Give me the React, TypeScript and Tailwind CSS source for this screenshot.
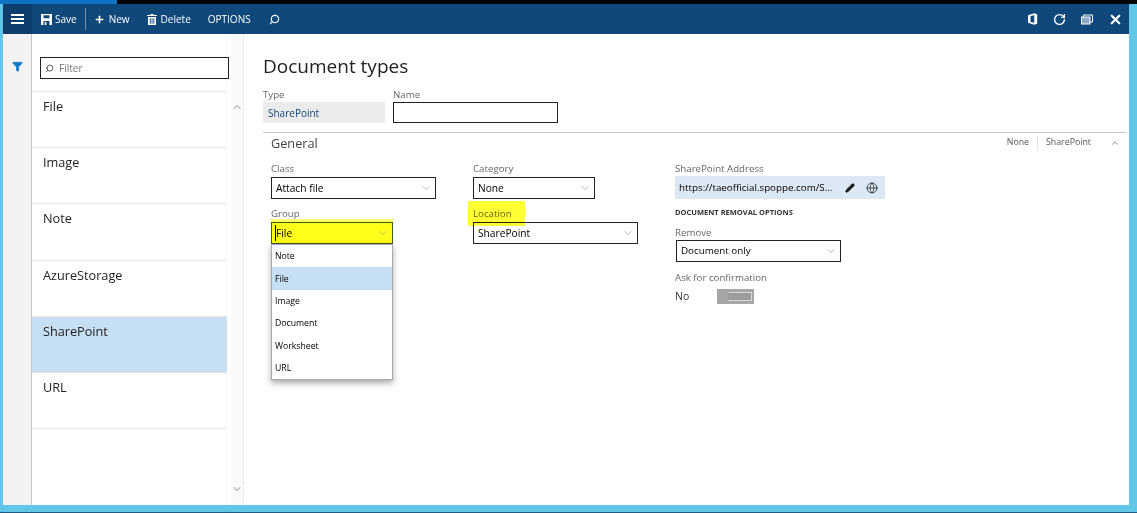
import { ChevronDown, ChevronUp, Filter, Globe, Pencil, Plus, RotateCw, Search, X } from "lucide-react";

const listItems = ["File", "Image", "Note", "AzureStorage", "SharePoint", "URL"];
const groupOptions = ["Note", "File", "Image", "Document", "Worksheet", "URL"];

function Label({ text, className = "" }: { text: string; className?: string }) {
  return <div className={`h-[16px] text-[9.7px] leading-[15px] text-[#666666] ${className}`}>{text}</div>;
}

function SelectBox({ value, width, textSize = "text-[10.2px]" }: { value: string; width: string; textSize?: string }) {
  return (
    <div className={`flex h-[22px] items-center justify-between border border-[#222222] bg-white pl-1 pr-[3px] ${width}`}>
      <span className={`pt-px text-black ${textSize}`}>{value}</span>
      <ChevronDown className="h-3 w-3 text-[#888888]" strokeWidth={1.25} />
    </div>
  );
}

export default function App() {
  return (
    <div className="flex h-[513px] w-[1137px] flex-col overflow-hidden bg-[#62c6e8] font-['Open_Sans',sans-serif] text-[#222222]">
      {/* Top strip */}
      <div className="flex h-1 shrink-0 bg-black">
        <div className="w-[117px] bg-[#0f73c4]" />
      </div>

      <div className="mr-2 ml-[3px] flex h-[501px] shrink-0 flex-col bg-white">
        {/* Command bar */}
        <div className="flex h-[30px] shrink-0 items-center bg-[#11487c] text-[10px] text-white">
          <div className="flex h-full w-[29px] items-center justify-center bg-[#0d3d6b]">
            <div className="flex w-[13px] flex-col gap-[2px]">
              <div className="h-[2px] bg-white" />
              <div className="h-[2px] bg-white" />
              <div className="h-[2px] bg-white" />
            </div>
          </div>
          <div className="ml-[9px] flex items-center gap-[3px]">
            <svg viewBox="0 0 11 11" className="h-[11px] w-[11px]" fill="white">
              <path d="M0 0h11v11H8.5V7h-6v4H0ZM2.5 1.2v3h6v-3ZM3.8 8h1.6v3H3.8Z" fillRule="evenodd" />
            </svg>
            <span className="pt-px">Save</span>
          </div>
          <div className="ml-2 h-[22px] w-px bg-[#6f93b5]" />
          <div className="ml-2 flex items-center gap-1">
            <Plus className="h-[11px] w-[11px]" strokeWidth={3.5} />
            <span className="pt-px">New</span>
          </div>
          <div className="ml-[17px] flex items-center gap-1">
            <svg viewBox="0 0 10 11" className="h-[11px] w-[10px]" fill="white">
              <path d="M3.5 0h3v1H10v1H0V1h3.5ZM1 3h8v8H1ZM2.8 4.2v5.6h.9V4.2Zm1.8 0v5.6h.9V4.2Zm1.8 0v5.6h.9V4.2Z" fillRule="evenodd" />
            </svg>
            <span className="pt-px">Delete</span>
          </div>
          <span className="ml-[17px] pt-px">OPTIONS</span>
          <Search className="ml-[18px] h-[11px] w-[11px] -scale-x-100" strokeWidth={2.5} />
          <div className="ml-auto flex items-center gap-[15px] pr-[6px]">
            <svg viewBox="0 0 12 14" className="h-[12px] w-[10px]" fill="white">
              <path d="M0 2.6 7.5 0 11 1.2v11.6L7.5 14 0 11.4ZM7.5 2.4 3 3.4v7.2l4.5 1Z" fillRule="evenodd" />
            </svg>
            <RotateCw className="h-[13px] w-[13px]" strokeWidth={2.5} />
            <svg viewBox="0 0 12 11" className="h-[11px] w-[12px]" fill="none" stroke="white" strokeWidth="1">
              <rect x="0.5" y="3" width="8.5" height="7" fill="#8fa9c4" />
              <path d="M2.5 3V1h9v7H9" />
            </svg>
            <X className="h-[15px] w-[15px]" strokeWidth={3.5} />
          </div>
        </div>

        <div className="flex min-h-0 flex-1">
          {/* Filter rail */}
          <div className="flex w-[29px] shrink-0 justify-center border-r border-[#c8c8c8] bg-[#f2f2f2] pt-[27px]">
            <Filter className="h-[11px] w-[11px] fill-[#0f7ac4] text-[#0f7ac4]" />
          </div>

          {/* Document list */}
          <div className="flex w-[212px] shrink-0 border-r border-[#ececec]">
            <div className="w-[195px] shrink-0">
              <div className="h-[58px] border-b border-[#e6e6e6] px-2 pt-[23px]">
                <div className="flex h-[22px] w-[189px] items-center gap-[5px] border border-[#222222] pl-1">
                  <Search className="h-[9px] w-[9px] -scale-x-100 text-[#555555]" strokeWidth={2.5} />
                  <span className="text-[10px] text-[#777777]">Filter</span>
                </div>
              </div>
              {listItems.map((item) => (
                <div
                  key={item}
                  className={`h-[56.2px] border-b border-[#e6e6e6] pl-[11px] pt-[5px] text-[12.7px] ${item === "SharePoint" ? "bg-[#c7dff2]" : ""}`}
                >
                  {item}
                </div>
              ))}
            </div>
            <div className="ml-1 flex flex-1 flex-col items-center justify-between bg-[#fafafa] pt-[67px] pb-[10px]">
              <ChevronUp className="h-[12px] w-[12px] text-[#bdbdbd]" strokeWidth={2.5} />
              <ChevronDown className="h-[12px] w-[12px] text-[#bdbdbd]" strokeWidth={2.5} />
            </div>
          </div>

          {/* Details */}
          <div className="min-w-0 flex-1 pr-[3px] pl-[19px]">
            <h1 className="mt-[16px] h-[32px] text-[19px] leading-[32px] font-normal text-[#222222]">Document types</h1>
            <div className="mt-[5px] flex gap-2">
              <div>
                <Label text="Type" />
                <div className="-mt-px flex h-[21px] w-[122px] items-center bg-[#ebebeb] pt-px pl-[5px] text-[10px] text-[#11487c]">SharePoint</div>
              </div>
              <div>
                <Label text="Name" />
                <div className="-mt-px h-[21px] w-[165px] border border-[#222222]" />
              </div>
            </div>

            <div className="mt-[9px] border-t border-[#cccccc]">
              <div className="flex h-[20px] items-center justify-between pr-[6px] pl-[8px]">
                <span className="pt-px text-[12.7px] text-[#444444]">General</span>
                <div className="flex items-center text-[8.8px] text-[#555555]">
                  <span className="border-r border-[#e2e2e2] pr-2">None</span>
                  <span className="pl-2">SharePoint</span>
                  <ChevronUp className="ml-[19px] h-[10px] w-[10px]" strokeWidth={1.5} />
                </div>
              </div>

              <div className="mt-[8px] flex pl-2">
                {/* First column */}
                <div className="w-[202px]">
                  <Label text="Class" />
                  <SelectBox value="Attach file" width="w-[165px]" />
                  <Label text="Group" className="mt-[7px]" />
                  <div className="relative w-[122px]">
                    <div className="flex h-[22px] items-center justify-between border border-[#3d5a1f] bg-[#ffff1a] pl-[3px] pr-[3px] shadow-[0_-3px_0_#ffff66]">
                      <span className="border-l border-black pt-px text-[10.2px] text-black">File</span>
                      <ChevronDown className="h-3 w-3 text-[#888888]" strokeWidth={1.25} />
                    </div>
                    <div className="absolute top-[22px] left-0 w-[122px] border border-[#aaaaaa] bg-white shadow-[0_3px_6px_rgba(0,0,0,0.35)]">
                      {groupOptions.map((option) => (
                        <div
                          key={option}
                          className={`flex h-[22.4px] items-center pl-[3px] pt-px text-[8.7px] text-black ${option === "File" ? "bg-[#c7dff2]" : ""}`}
                        >
                          {option}
                        </div>
                      ))}
                    </div>
                  </div>
                </div>

                {/* Second column */}
                <div className="relative w-[202px]">
                  <Label text="Category" />
                  <SelectBox value="None" width="w-[122px]" />
                  <Label text="Location" className="mt-[7px]" />
                  <SelectBox value="SharePoint" width="w-[165px]" />
                  {/* marker highlight drawn over the label */}
                  <div className="absolute top-[40px] -left-[5px] h-[25px] w-[57px] bg-[#ffff33] mix-blend-multiply" />
                </div>

                {/* Third column */}
                <div>
                  <Label text="SharePoint Address" />
                  <div className="-mt-px flex h-[23px] w-[210px] items-center bg-[#dce8f4] pl-1 text-[9.8px] text-black">
                    <span className="shrink-0 pt-px">https://taeofficial.spoppe.com/S...</span>
                    <Pencil className="ml-[13px] h-[10px] w-[10px] shrink-0 fill-[#222222]" />
                    <Globe className="ml-[11px] h-3 w-3 shrink-0" strokeWidth={1.25} />
                  </div>
                  <div className="mt-[6px] h-[14px] text-[7.5px] leading-[14px] font-bold text-[#333333]">DOCUMENT REMOVAL OPTIONS</div>
                  <Label text="Remove" className="mt-[6px]" />
                  <SelectBox value="Document only" width="-mt-px ml-px w-[165px]" textSize="text-[9.8px]" />
                  <Label text="Ask for confirmation" className="mt-[8px]" />
                  <div className="mt-[3px] flex h-[15px] items-center">
                    <span className="w-[42px] text-[10.5px] text-[#333333]">No</span>
                    <div className="flex h-[15px] w-[37px] items-center justify-end bg-[#a6a6a6] p-[2px]">
                      <div className="h-[9px] w-[24px] border border-[#d8d8d8] border-l-transparent bg-[#9c9c9c]" />
                    </div>
                  </div>
                </div>
              </div>
            </div>
          </div>
        </div>
      </div>

      <div className="mt-[7px] h-px bg-[#1d5d84]" />
    </div>
  );
}
